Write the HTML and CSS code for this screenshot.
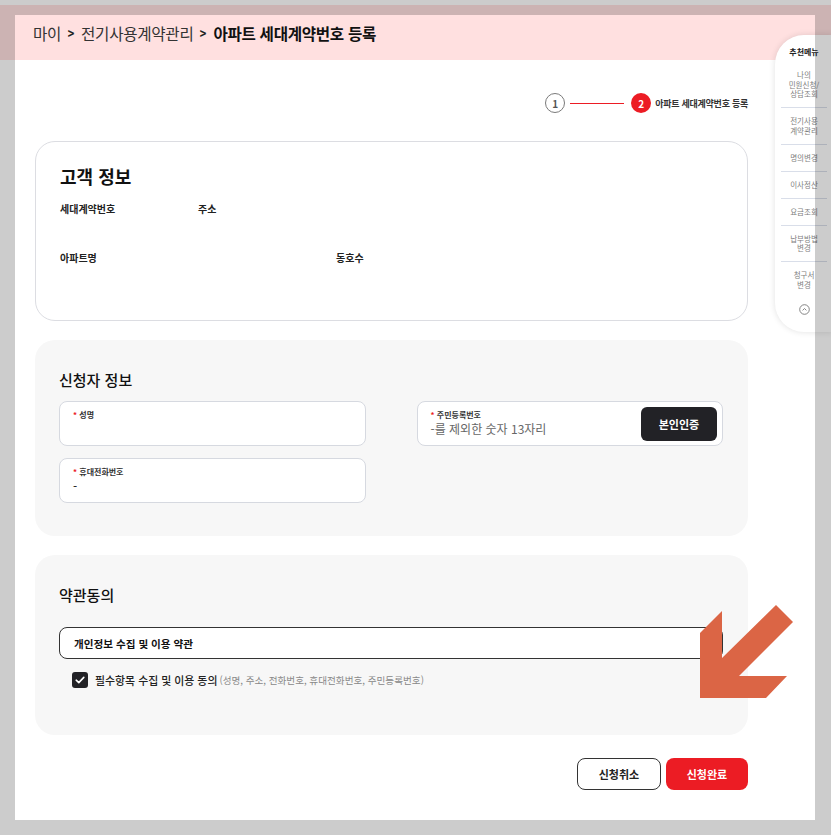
FILE: index.html
```html
<!DOCTYPE html>
<html lang="ko">
<head>
<meta charset="utf-8">
<title>아파트 세대계약번호 등록</title>
<link rel="stylesheet" href="styles.css">
</head>
<body>
<header class="topbar">
  <nav class="crumbs">
    <span>마이</span>
    <span class="chev">&gt;</span>
    <span>전기사용계약관리</span>
    <span class="chev">&gt;</span>
    <strong>아파트 세대계약번호 등록</strong>
  </nav>
</header>

<main class="content">
  <div class="stepper">
    <span class="step step-done">1</span>
    <span class="step-line"></span>
    <span class="step step-on">2</span>
    <span class="step-label">아파트 세대계약번호 등록</span>
  </div>

  <section class="card card-line">
    <h2 class="card-title">고객 정보</h2>
    <div class="info-row">
      <span class="info-label w138">세대계약번호</span>
      <span class="info-label">주소</span>
    </div>
    <div class="info-row row2">
      <span class="info-label w276">아파트명</span>
      <span class="info-label">동호수</span>
    </div>
  </section>

  <section class="card card-gray applicant">
    <h2 class="card-title sm">신청자 정보</h2>
    <div class="field-grid">
      <div class="field">
        <div class="field-text">
          <span class="field-label"><i class="req">*</i> 성명</span>
          <span class="field-value"></span>
        </div>
      </div>
      <div class="field">
        <div class="field-text">
          <span class="field-label"><i class="req">*</i> 주민등록번호</span>
          <span class="field-value ph">-를 제외한 숫자 13자리</span>
        </div>
        <button class="btn-verify">본인인증</button>
      </div>
      <div class="field">
        <div class="field-text">
          <span class="field-label"><i class="req">*</i> 휴대전화번호</span>
          <span class="field-value">-</span>
        </div>
      </div>
    </div>
  </section>

  <section class="card card-gray terms">
    <h2 class="card-title sm">약관동의</h2>
    <div class="terms-box">개인정보 수집 및 이용 약관</div>
    <label class="agree">
      <span class="checkbox">
        <svg width="10" height="8" viewBox="0 0 10 8"><path d="M1.2 4.2 L3.8 6.6 L8.8 1.4" fill="none" stroke="#fff" stroke-width="1.6" stroke-linecap="round" stroke-linejoin="round"/></svg>
      </span>
      <span class="agree-main">필수항목 수집 및 이용 동의</span>
      <span class="agree-sub">(성명, 주소, 전화번호, 휴대전화번호, 주민등록번호)</span>
    </label>
  </section>

  <div class="actions">
    <button class="btn btn-outline">신청취소</button>
    <button class="btn btn-red">신청완료</button>
  </div>
</main>

<aside class="quick">
  <div class="quick-title">추천메뉴</div>
  <ul class="quick-list">
    <li>나의<br>민원신청/<br>상담조회</li>
    <li>전기사용<br>계약관리</li>
    <li>명의변경</li>
    <li>이사정산</li>
    <li>요금조회</li>
    <li>납부방법<br>변경</li>
    <li>청구서<br>변경</li>
  </ul>
  <span class="quick-up">
    <svg width="11" height="11" viewBox="0 0 11 11"><circle cx="5.5" cy="5.5" r="4.8" fill="none" stroke="#777" stroke-width="0.9"/><path d="M3.6 6.4 L5.5 4.5 L7.4 6.4" fill="none" stroke="#777" stroke-width="0.9"/></svg>
  </span>
</aside>

<div class="spotlight"></div>

<svg class="pointer" width="110" height="110" viewBox="0 0 110 110">
  <polygon points="10,33 32,11 32,58 86,5 103,22 49,76 97,76 76,98 10,98" fill="#db6545"/>
</svg>
</body>
</html>
```

FILE: styles.css
```css
* { box-sizing: border-box; }
html, body { margin: 0; padding: 0; }
body {
  background: #fff;
  font-family: "Noto Sans CJK KR", "Noto Sans", sans-serif;
  color: #111;
  padding-top: 5px;
  height: 835px;
  overflow: hidden;
  position: relative;
}

.topbar {
  height: 55px;
  background: #ffe0e0;
  display: flex;
  align-items: center;
  padding-left: 33px;
}
.crumbs {
  display: flex;
  align-items: center;
  gap: 6px;
  font-size: 15.6px;
  color: #333;
  letter-spacing: -0.3px;
}
.crumbs strong { font-weight: 700; color: #111; }
.crumbs .chev { font-weight: 700; font-size: 14px; transform: scaleX(0.8); color: #222; }

.content {
  width: 713px;
  margin-left: 35px;
  padding-top: 33px;
}

.stepper {
  display: flex;
  align-items: center;
  justify-content: flex-end;
  height: 20px;
}
.step {
  width: 20px;
  height: 20px;
  border-radius: 50%;
  display: flex;
  align-items: center;
  justify-content: center;
  font-size: 10px;
  font-weight: 700;
}
.step-done { border: 1px solid #7a7a7a; color: #555; background: #fff; }
.step-on { background: #ec1c24; color: #fff; }
.step-line { width: 54px; height: 1px; background: #ec1c24; margin: 0 7px 0 5px; }
.step-label { font-size: 9px; font-weight: 700; color: #333; margin-left: 4px; letter-spacing: -0.25px; }

.card { border-radius: 20px; }
.card-line {
  margin-top: 28px;
  height: 180px;
  border: 1px solid #dcdde2;
  padding: 20px 24px 0 24px;
}
.card-gray { background: #f7f7f7; margin-top: 19px; }

.card-title {
  margin: 0;
  font-size: 18px;
  font-weight: 700;
  line-height: 28px;
  color: #111;
}
.card-title.sm { font-size: 15px; font-weight: 500; line-height: 24px; }

.info-row { display: flex; margin-top: 11px; }
.info-row.row2 { margin-top: 33px; }
.info-label { font-size: 10px; font-weight: 700; color: #222; line-height: 16px; }
.w138 { width: 138px; }
.w276 { width: 276px; }

.applicant { height: 196px; padding: 28px 25px 0 24px; }
.field-grid {
  display: grid;
  grid-template-columns: 1fr 1fr;
  column-gap: 51px;
  row-gap: 12px;
  margin-top: 9px;
}
.field {
  height: 45px;
  background: #fff;
  border: 1px solid #d6d9e0;
  border-radius: 8px;
  display: flex;
  align-items: center;
  justify-content: space-between;
  padding: 0 5px 0 13px;
}
.field-text { display: flex; flex-direction: column; }
.field-label { font-size: 8px; font-weight: 700; color: #333; line-height: 11px; }
.req { font-style: normal; color: #ec1c24; }
.field-value { font-size: 12px; line-height: 18px; height: 18px; color: #111; }
.field-value.ph { color: #666; }
.btn-verify {
  width: 76px;
  height: 34px;
  background: #222226;
  color: #fff;
  border: 0;
  border-radius: 6px;
  font-family: inherit;
  font-size: 11px;
  font-weight: 700;
}

.terms { height: 180px; padding: 28px 25px 0 24px; }
.terms-box {
  margin-top: 20px;
  height: 32px;
  border: 1px solid #333;
  border-radius: 8px;
  background: #fff;
  display: flex;
  align-items: center;
  padding-left: 14px;
  font-size: 10.6px;
  font-weight: 700;
  color: #111;
}
.agree {
  display: flex;
  align-items: center;
  margin-top: 12px;
  padding-left: 13px;
  height: 18px;
}
.checkbox {
  width: 16px;
  height: 16px;
  border-radius: 3px;
  background: #222226;
  display: flex;
  align-items: center;
  justify-content: center;
  margin-right: 7px;
}
.agree-main { font-size: 10.9px; font-weight: 500; color: #222; }
.agree-sub { font-size: 9.6px; color: #888; margin-left: 2px; }

.actions {
  display: flex;
  justify-content: flex-end;
  gap: 5px;
  margin-top: 23px;
}
.btn {
  height: 32px;
  border-radius: 8px;
  font-family: inherit;
  font-size: 11px;
  font-weight: 700;
}
.btn-outline { width: 84px; background: #fff; border: 1px solid #333; color: #222; }
.btn-red { width: 82px; background: #ec1c24; border: 0; color: #fff; }

.quick {
  position: absolute;
  left: 775px;
  top: 35px;
  width: 58px;
  height: 297px;
  background: #fff;
  border-radius: 29px 0 0 29px;
  box-shadow: 0 0 6px rgba(0,0,0,0.12);
  display: flex;
  flex-direction: column;
  align-items: center;
  padding: 10px 6px 0 6px;
  text-align: center;
}
.quick-title { font-size: 8px; font-weight: 700; color: #222; line-height: 14px; white-space: nowrap; }
.quick-list { list-style: none; margin: 3px 0 0; padding: 0; width: 46px; }
.quick-list li {
  font-size: 7.5px;
  color: #808080;
  line-height: 9.5px;
  padding: 8.25px 0;
  border-bottom: 1px solid #d9dee9;
  white-space: nowrap;
}
.quick-list li:last-child { border-bottom: 0; }
.quick-up { display: flex; margin-top: 6px; }

.spotlight {
  position: absolute;
  left: 15px;
  top: 15px;
  width: 800px;
  height: 805px;
  box-shadow: 0 0 0 2000px rgba(0,0,0,0.2);
  pointer-events: none;
}

.pointer {
  position: absolute;
  left: 690px;
  top: 600px;
}
```
